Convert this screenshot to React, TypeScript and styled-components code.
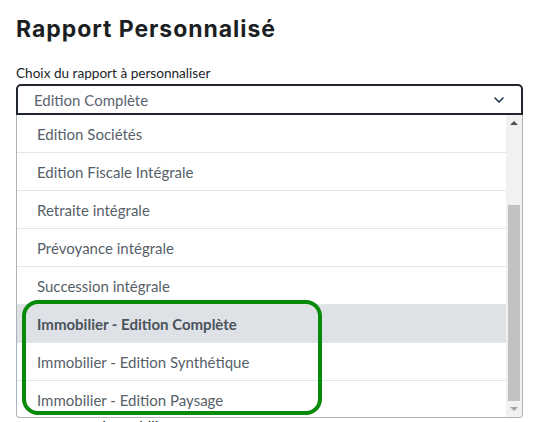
import styled, { createGlobalStyle } from 'styled-components';
import { ChevronDown } from 'lucide-react';

const GlobalStyle = createGlobalStyle`
  body {
    margin: 0;
    background: #ffffff;
    overflow: hidden;
    font-family: Lato, 'Liberation Sans', sans-serif;
  }
`;

const Page = styled.main`
  padding: 14px 16px 0;
  width: 507px;
`;

const Title = styled.h1`
  margin: 0 0 20px;
  font-family: Inter, 'Liberation Sans', sans-serif;
  font-size: 23px;
  font-weight: 700;
  line-height: 30px;
  color: #1b1f24;
  letter-spacing: 0.95px;
`;

const Label = styled.label`
  display: block;
  margin-bottom: 2px;
  font-size: 13.6px;
  line-height: 18px;
  color: #212529;
`;

const Field = styled.div`
  position: relative;
`;

const SelectBox = styled.div`
  display: flex;
  align-items: center;
  justify-content: space-between;
  height: 27px;
  padding: 0 16px;
  border: 2px solid #1f262e;
  border-radius: 5px 5px 0 0;
  font-size: 15px;
  color: #5a6470;

  & svg {
    color: #1e3550;
    margin-right: -2px;
  }
`;

const Dropdown = styled.div`
  position: absolute;
  top: 100%;
  left: 0;
  right: 0;
  z-index: 2;
  display: flex;
  height: 302px;
  background: #ffffff;
  border: 1px solid #aab2ba;
  border-top: none;
  border-radius: 0 0 4px 4px;
  overflow: hidden;
`;

const Options = styled.ul`
  flex: 1;
  margin: 0;
  padding: 0;
  list-style: none;
`;

const Option = styled.li<{ $active?: boolean }>`
  display: flex;
  align-items: center;
  height: 37px;
  padding-left: 20px;
  border-bottom: 1px solid #e3e6e9;
  font-size: 15px;
  font-weight: ${({ $active }) => ($active ? 700 : 400)};
  color: ${({ $active }) => ($active ? '#4a525b' : '#565f69')};
  background: ${({ $active }) => ($active ? '#dee2e6' : 'transparent')};
`;

const Scrollbar = styled.div`
  display: flex;
  flex-direction: column;
  width: 16px;
  background: #f1f1f1;
`;

const ArrowButton = styled.div<{ $down?: boolean }>`
  display: flex;
  align-items: center;
  justify-content: center;
  height: 17px;

  &::before {
    content: '';
    border-left: 4px solid transparent;
    border-right: 4px solid transparent;
    ${({ $down }) =>
      $down ? 'border-top: 4px solid #a3a3a3;' : 'border-bottom: 4px solid #505050;'}
  }
`;

const Track = styled.div`
  flex: 1;
  padding: 0 2px;
`;

const Thumb = styled.div`
  background: #c1c1c1;
`;

const Annotation = styled.div`
  position: absolute;
  left: 5px;
  top: 185px;
  width: 292px;
  height: 107px;
  border: 4px solid #078a07;
  border-radius: 16px;
  pointer-events: none;
`;

const Below = styled.div`
  margin-top: 301px;
  padding-left: 86px;
  font-size: 15px;
  line-height: 20px;
  color: #212529;
`;

const options = [
  'Edition Sociétés',
  'Edition Fiscale Intégrale',
  'Retraite intégrale',
  'Prévoyance intégrale',
  'Succession intégrale',
  'Immobilier - Edition Complète',
  'Immobilier - Edition Synthétique',
  'Immobilier - Edition Paysage',
];

const activeOption = 'Immobilier - Edition Complète';

const thumbTop = 74;
const thumbHeight = 196;

export default function App() {
  return (
    <>
      <GlobalStyle />
      <Page>
        <Title>Rapport Personnalisé</Title>
        <Label>Choix du rapport à personnaliser</Label>
        <Field>
          <SelectBox>
            <span>Edition Complète</span>
            <ChevronDown size={16} strokeWidth={2.4} />
          </SelectBox>
          <Dropdown>
            <Options>
              {options.map((label) => (
                <Option key={label} $active={label === activeOption}>
                  {label}
                </Option>
              ))}
            </Options>
            <Scrollbar>
              <ArrowButton />
              <Track>
                <Thumb style={{ marginTop: thumbTop, height: thumbHeight }} />
              </Track>
              <ArrowButton $down />
            </Scrollbar>
            <Annotation />
          </Dropdown>
        </Field>
        <Below>Immobilier</Below>
      </Page>
    </>
  );
}
